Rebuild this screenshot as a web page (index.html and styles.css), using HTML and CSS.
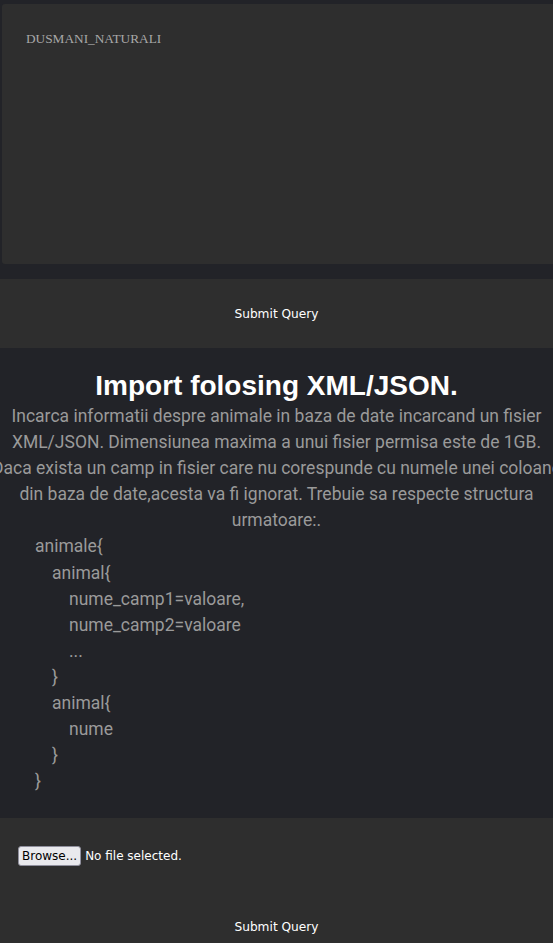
FILE: index.html
```html
<!DOCTYPE html>
<html lang="ro">
<head>
<meta charset="utf-8">
<title>Import</title>
<link rel="stylesheet" href="styles.css">
</head>
<body>
<form class="query-form">
  <div class="query-box">DUSMANI_NATURALI</div>
  <button type="button" class="submit-bar">Submit Query</button>
</form>
<section class="import">
  <h1 class="import-title">Import folosing XML/JSON.</h1>
  <p class="import-desc">Incarca informatii despre animale in baza de date incarcand un fisier<br>XML/JSON. Dimensiunea maxima a unui fisier permisa este de 1GB.<br>Daca exista un camp in fisier care nu corespunde cu numele unei coloane<br>din baza de date,acesta va fi ignorat. Trebuie sa respecte structura<br>urmatoare:.</p>
  <div class="structure">
    <div class="l0">animale{</div>
    <div class="l1">animal{</div>
    <div class="l2">nume_camp1=valoare,</div>
    <div class="l2">nume_camp2=valoare</div>
    <div class="l2">...</div>
    <div class="l1">}</div>
    <div class="l1">animal{</div>
    <div class="l2">nume</div>
    <div class="l1">}</div>
    <div class="l0">}</div>
  </div>
</section>
<form class="upload-form">
  <div class="file-row">
    <span class="browse-btn">Browse...</span>
    <span class="file-status">No file selected.</span>
  </div>
  <button type="button" class="submit-bar">Submit Query</button>
</form>
</body>
</html>
```
FILE: styles.css
```css
html, body {
  margin: 0;
  padding: 0;
  background: #222328;
}
body {
  font-family: "Roboto", "Liberation Sans", sans-serif;
}
.query-form {
  display: flex;
  flex-direction: column;
  padding-top: 4px;
}
.query-box {
  margin-left: 2px;
  height: 260px;
  box-sizing: border-box;
  padding: 26px 24px;
  background: #2e2e2e;
  border-radius: 3px 0 0 3px;
  font-family: "Liberation Serif", serif;
  font-size: 13.3px;
  line-height: 18px;
  color: #a8a8a8;
}
.submit-bar {
  display: block;
  width: 100%;
  height: 69px;
  margin: 15px 0 0;
  padding: 0;
  border: 0;
  background: #2e2e2e;
  color: #ffffff;
  font-family: "DejaVu Sans", sans-serif;
  font-size: 12.2px;
  text-align: center;
}
.import {
  padding: 22px 0 24px;
  overflow: hidden;
}
.import-title {
  margin: 0;
  font-family: "Liberation Sans", Arial, sans-serif;
  font-weight: bold;
  font-size: 28px;
  line-height: 32px;
  color: #ffffff;
  text-align: center;
}
.import-desc {
  margin: 1px -20px 0;
  font-size: 17.5px;
  line-height: 26.1px;
  color: #9a9a9a;
  text-align: center;
}
.structure {
  font-size: 17.5px;
  line-height: 26.1px;
  color: #9a9a9a;
  padding-left: 35px;
}
.l1 { padding-left: 17px; }
.l2 { padding-left: 34px; }
.upload-form {
  background: #2e2e2e;
  padding-top: 28px;
  display: flex;
  flex-direction: column;
}
.upload-form .submit-bar {
  margin-top: 26px;
}
.file-row {
  display: flex;
  align-items: center;
  gap: 4px;
  padding-left: 18px;
  font-family: "DejaVu Sans", sans-serif;
  font-size: 12px;
  color: #ffffff;
}
.browse-btn {
  box-sizing: border-box;
  height: 20px;
  padding: 0 3px;
  display: inline-flex;
  align-items: center;
  background: #e9e9ed;
  color: #000000;
  border: 1px solid #8f8f9d;
  border-radius: 3px;
}
```
